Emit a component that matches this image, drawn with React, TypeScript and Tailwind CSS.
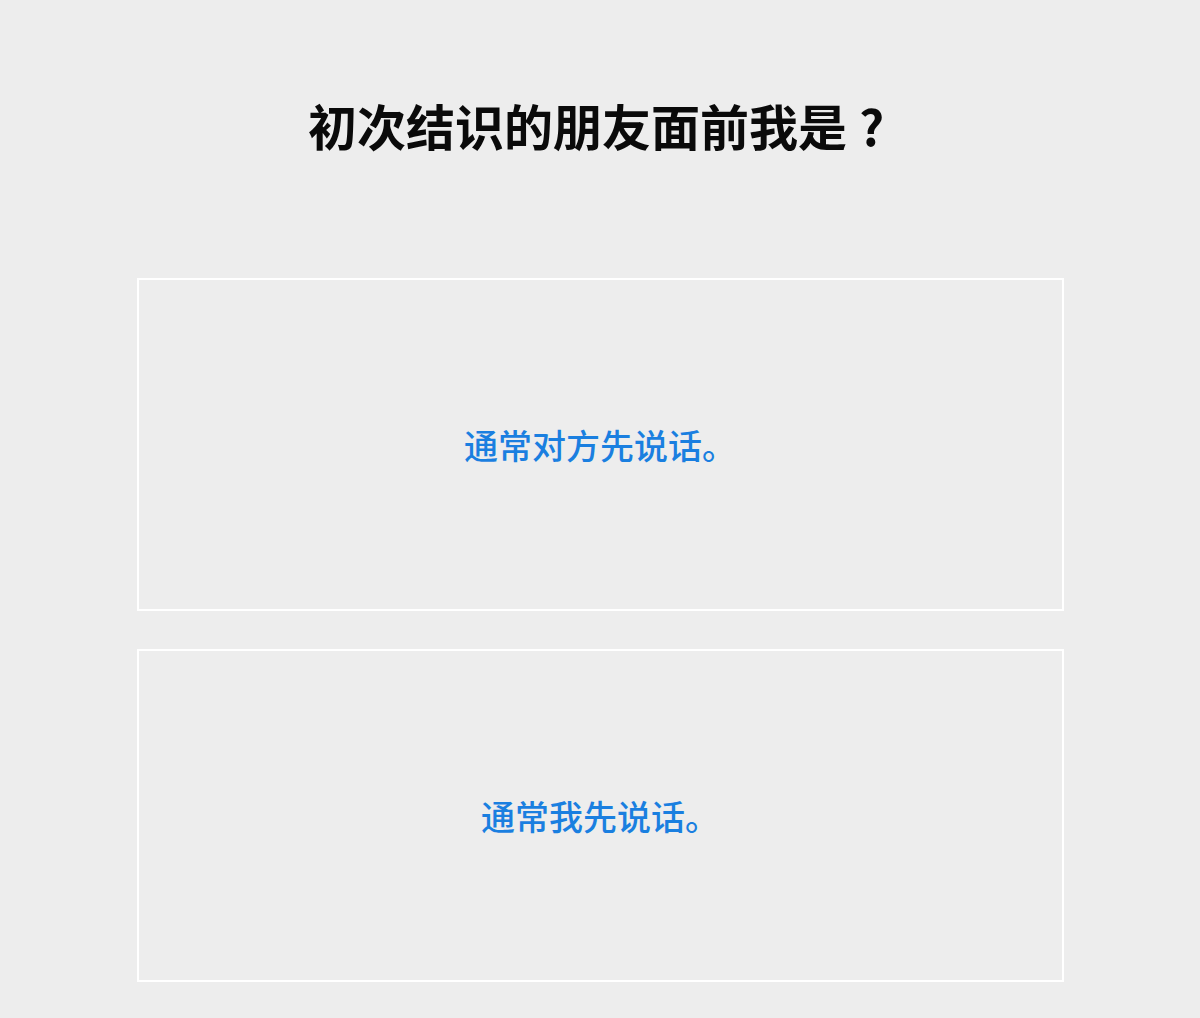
export default function App() {
  const options = ["通常对方先说话。", "通常我先说话。"];
  return (
    <div
      className="min-h-[1018px] w-full bg-[#ededed] flex flex-col items-center"
      style={{ fontFamily: '"Noto Sans CJK SC", "Noto Sans", sans-serif' }}
    >
      <h1 className="mt-[94px] h-[60px] flex items-center text-[49px] font-bold leading-none text-[#0a0a0a] pl-[4px]">
        初次结识的朋友面前我是
        <span className="inline-block w-[1em] text-center">?</span>
      </h1>
      <div className="mt-[124px] w-[927px] flex flex-col gap-[38px]">
        {options.map((o) => (
          <button
            key={o}
            className="h-[333px] w-full border-2 border-white flex items-center justify-center text-[34px] font-medium leading-none text-[#1a7fe0]"
          >
            {o}
          </button>
        ))}
      </div>
    </div>
  );
}
